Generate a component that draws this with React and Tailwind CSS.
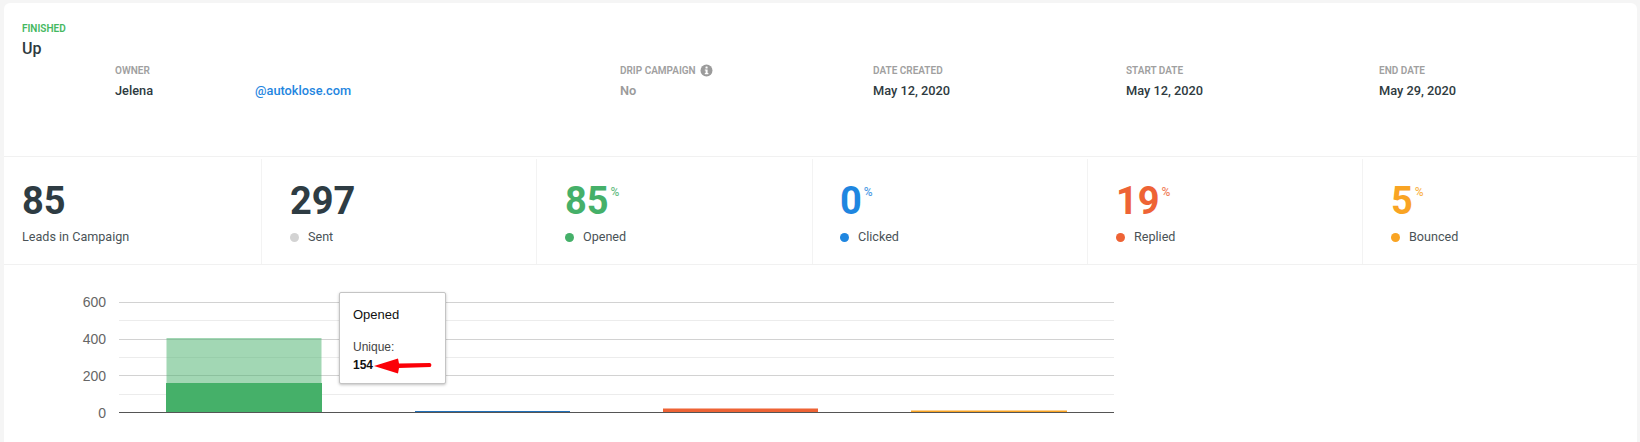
const meta = [
  { label: "DATE CREATED", value: "May 12, 2020" },
  { label: "START DATE", value: "May 12, 2020" },
  { label: "END DATE", value: "May 29, 2020" },
];

const stats = [
  { value: "85", label: "Leads in Campaign", width: "w-[258px]", pad: "pl-[18px]" },
  { value: "297", label: "Sent", dot: "bg-[#d3d3d3]", width: "w-[275px]", pad: "pl-[28px]" },
  { value: "85", label: "Opened", unit: true, color: "text-[#45b069]", dot: "bg-[#45b069]", width: "w-[276px]", pad: "pl-[28px]" },
  { value: "0", label: "Clicked", unit: true, color: "text-[#1f86e0]", dot: "bg-[#1f86e0]", width: "w-[275px]", pad: "pl-[27px]" },
  { value: "19", label: "Replied", unit: true, color: "text-[#ee6335]", dot: "bg-[#ee6335]", width: "w-[275px]", pad: "pl-[28px]" },
  { value: "5", label: "Bounced", unit: true, color: "text-[#f9a423]", dot: "bg-[#f9a423]", width: "flex-1", pad: "pl-[28px]" },
];

function InfoIcon() {
  return (
    <svg width="13" height="13" viewBox="0 0 13 13" className="ml-[4px] -mt-[2px]">
      <circle cx="6.5" cy="6.5" r="6" fill="#9b9b9b" />
      <rect x="5.5" y="2.4" width="2.1" height="2" rx="0.5" fill="#fff" />
      <path d="M4.8 5.4h2.8v3.7h.8v1.2H4.8V9.1h.8V6.6h-.8z" fill="#fff" />
    </svg>
  );
}

function Label({ children }) {
  return <div className="text-[10px] leading-[14px] font-semibold text-[#a0a0a0]">{children}</div>;
}

function Chart() {
  const majors = [302.5, 339.5, 375.5];
  const minors = [320.5, 357.5, 394.5];
  const ticks = [
    { y: 307, t: "600" },
    { y: 344, t: "400" },
    { y: 380.5, t: "200" },
    { y: 417.5, t: "0" },
  ];
  return (
    <svg width="1125" height="177" viewBox="4 265 1125 177" className="block">
      {minors.map((y) => (
        <line key={y} x1="119" x2="1114" y1={y} y2={y} stroke="#ececec" />
      ))}
      {majors.map((y) => (
        <line key={y} x1="119" x2="1114" y1={y} y2={y} stroke="#d2d2d2" />
      ))}
      {ticks.map((k) => (
        <text key={k.t} x="106" y={k.y} textAnchor="end" fontSize="14" fill="#666" fontFamily="'Liberation Sans', sans-serif">
          {k.t}
        </text>
      ))}
      <rect x="166.5" y="338" width="155" height="74" fill="#45b069" fillOpacity="0.5" />
      <rect x="166" y="383" width="156" height="29" fill="#45b069" />
      <rect x="415" y="411" width="155" height="1" fill="#1f6fb8" />
      <rect x="663" y="408.5" width="155" height="3.5" fill="#ee6335" />
      <rect x="911" y="410.5" width="156" height="1.5" fill="#f9a423" />
      <line x1="119" x2="1114" y1="412.5" y2="412.5" stroke="#555" />
    </svg>
  );
}

export default function App() {
  return (
    <div className="h-[442px] bg-[#f5f5f5] pt-[3px] pl-[4px] pr-[3px] font-['Roboto',sans-serif] overflow-hidden">
      <div className="h-full rounded-t-[6px] bg-white">
        {/* Header */}
        <div className="h-[154px] border-b border-[#f1f1f1] pl-[18px] pt-[21px]">
          <div className="text-[10px] leading-[10px] font-semibold text-[#45b85f]">FINISHED</div>
          <div className="mt-[5px] text-[16px] leading-[20px] font-medium text-[#2e3a40]">Up</div>
          <div className="mt-[5px] flex pl-[93px]">
            <div className="w-[505px]">
              <Label>OWNER</Label>
              <div className="mt-[4px] flex text-[12.8px] leading-[18px] font-medium text-[#2e3a40]">
                <span className="w-[140px]">Jelena</span>
                <span className="text-[#1f86e0]">@autoklose.com</span>
              </div>
            </div>
            <div className="w-[253px]">
              <div className="flex items-center">
                <Label>DRIP CAMPAIGN</Label>
                <InfoIcon />
              </div>
              <div className="mt-[4px] text-[12.8px] leading-[18px] font-semibold text-[#9b9b9b]">No</div>
            </div>
            {meta.map((m) => (
              <div key={m.label} className="w-[253px]">
                <Label>{m.label}</Label>
                <div className="mt-[4px] text-[12.8px] leading-[18px] font-medium text-[#2e3a40]">{m.value}</div>
              </div>
            ))}
          </div>
        </div>

        {/* Stats */}
        <div className="flex h-[108px] border-b border-[#f1f1f1]">
          {stats.map((s, i) => (
            <div key={i} className={`${s.width} ${s.pad} ${i < 5 ? "border-r border-[#f3f3f3]" : ""} mt-[2px] pt-[20px]`}>
              <div className="flex items-start">
                <span className={`text-[38px] leading-[44px] font-bold ${s.color || "text-[#2e3c43]"}`}>{s.value}</span>
                {s.unit && <span className={`ml-[2px] mt-[6px] text-[12px] leading-[14px] font-medium opacity-80 ${s.color}`}>%</span>}
              </div>
              <div className="mt-[5px] flex items-center text-[12.6px] leading-[18px] text-[#4a5357]">
                {s.dot && <span className={`mr-[9px] h-[9px] w-[9px] rounded-full ${s.dot}`} />}
                {s.label}
              </div>
            </div>
          ))}
        </div>

        {/* Chart */}
        <div className="relative font-['Liberation_Sans',sans-serif]">
          <Chart />
          <div className="absolute left-[335px] top-[27px] h-[92px] w-[107px] rounded-[2px] border border-[#c4c4c4] bg-white pl-[13px] pt-[14px] text-[#111] shadow-[0_1px_3px_rgba(0,0,0,0.25)]">
            <div className="text-[13px] leading-[16px]">Opened</div>
            <div className="mt-[17px] text-[12px] leading-[15px] text-[#444]">Unique:</div>
            <div className="mt-[3px] text-[12px] leading-[15px] font-bold">154</div>
            {/* red arrow pasted over the tooltip */}
            <svg width="60" height="16" viewBox="0 0 60 16" className="absolute left-[34px] top-[65px]">
              <path d="M0 8 L24 0.5 L25 5.5 L56 5 Q58.5 6.5 56.5 9 L25 10 L24 15.5 Z" fill="#fb0007" />
            </svg>
          </div>
        </div>
      </div>
    </div>
  );
}
